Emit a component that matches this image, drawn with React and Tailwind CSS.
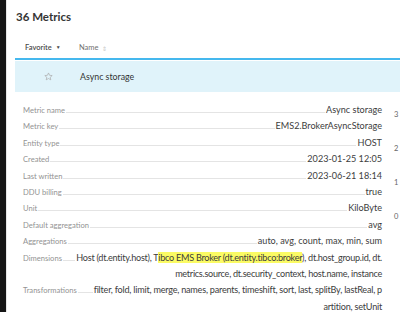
import React from "react";

function Row({ label, children, valueClass = "" }) {
  return (
    <div className="flex items-start leading-[16.4px]">
      <span className="shrink-0 text-[7.6px] text-[#939393]">{label}</span>
      <div className="flex-1 h-[11px] border-b border-[#e4e4e4] mx-[1px]" />
      <div className={"shrink-0 text-right whitespace-nowrap text-[9.1px] text-[#3d3d3d] " + valueClass}>
        {children}
      </div>
    </div>
  );
}

export default function App() {
  return (
    <div
      className="w-[400px] h-[312px] flex overflow-hidden bg-white"
      style={{ fontFamily: "Lato, 'Open Sans', sans-serif" }}
    >
      <div className="w-[6px] shrink-0 bg-[#151515]" />
      <div className="w-[1px] shrink-0 bg-[#e6e6e6]" />
      <div className="flex-1 min-w-0 pl-[8px]">
        <h1 className="mt-[9px] pl-[1px] text-[11.5px] leading-[16px] font-bold text-[#353535]">
          36 Metrics
        </h1>
        <div className="mt-[13px] h-[20px] flex items-center text-[7.5px]">
          <div className="w-[64px] pl-[10px] flex items-center gap-[4px] font-semibold text-[#4a4a4a]">
            <span>Favorite</span>
            <span className="text-[5px]">▼</span>
          </div>
          <div className="flex items-center gap-[4px] text-[#6f6f6f]">
            <span>Name</span>
            <span className="text-[6px] text-[#c8c8c8]">⇕</span>
          </div>
        </div>
        <div className="h-[2px] bg-[#45b8ee]" />
        <div className="h-[1px] bg-white" />
        <div className="h-[31px] bg-[#e0f3fa] flex items-center">
          <div className="w-[65px] flex justify-center pl-[2px]">
            <svg width="9" height="9" viewBox="0 0 24 24" fill="none" stroke="#a9a9a9" strokeWidth="1.8" strokeLinejoin="round">
              <path d="M12 2.5l2.9 6.3 6.9.7-5.2 4.6 1.5 6.8L12 17.4l-6.1 3.5 1.5-6.8L2.2 9.5l6.9-.7z" />
            </svg>
          </div>
          <span className="text-[8.8px] text-[#333]">Async storage</span>
        </div>
        <div className="flex pt-[10px]">
          <div className="w-[367px] shrink-0 pl-[8px] flex flex-col">
            <Row label="Metric name">Async storage</Row>
            <Row label="Metric key">EMS2.BrokerAsyncStorage</Row>
            <Row label="Entity type">HOST</Row>
            <Row label="Created">2023-01-25 12:05</Row>
            <Row label="Last written">2023-06-21 18:14</Row>
            <Row label="DDU billing">true</Row>
            <Row label="Unit">KiloByte</Row>
            <Row label="Default aggregation">avg</Row>
            <Row label="Aggregations">auto, avg, count, max, min, sum</Row>
            <Row label="Dimensions" valueClass="tracking-[-0.27px]">
              Host (dt.entity.host), T
              <span className="bg-[#fbfb64]">ibco EMS Broker (dt.entity.tibco:broker</span>
              ), dt.host_group.id, dt.
              <br />
              metrics.source, dt.security_context, host.name, instance
            </Row>
            <Row label="Transformations" valueClass="tracking-[-0.22px]">
              filter, fold, limit, merge, names, parents, timeshift, sort, last, splitBy, lastReal, p
              <br />
              artition, setUnit
            </Row>
          </div>
          <div className="ml-[12px] pt-[7px] flex flex-col gap-[22px] text-[7.5px] leading-[12px] text-[#666]">
            <span>3</span>
            <span>2</span>
            <span>1</span>
            <span>0</span>
          </div>
        </div>
      </div>
    </div>
  );
}
